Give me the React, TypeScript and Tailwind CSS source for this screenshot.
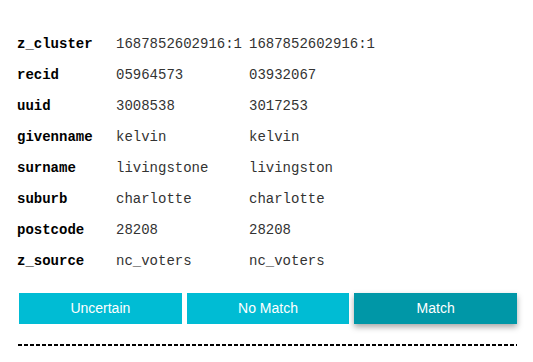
import React from "react";

const rows: [string, string, string][] = [
  ["z_cluster", "1687852602916:1", "1687852602916:1"],
  ["recid", "05964573", "03932067"],
  ["uuid", "3008538", "3017253"],
  ["givenname", "kelvin", "kelvin"],
  ["surname", "livingstone", "livingston"],
  ["suburb", "charlotte", "charlotte"],
  ["postcode", "28208", "28208"],
  ["z_source", "nc_voters", "nc_voters"],
];

export default function App() {
  return (
    <div className="w-[533px] h-[362px] bg-white overflow-hidden">
      <div
        className="pl-[17px] pt-[29px] text-[14px] text-black"
        style={{ fontFamily: '"Courier New", "Liberation Mono", monospace' }}
      >
        {rows.map(([k, a, b]) => (
          <div key={k} className="grid grid-cols-[99px_133px_1fr] h-[31px] items-center">
            <div className="font-bold text-black">{k}</div>
            <div className="text-[#333]">{a}</div>
            <div className="text-[#333]">{b}</div>
          </div>
        ))}
      </div>
      <div
        className="ml-[18px] w-[499px] mt-[16px]"
        style={{ fontFamily: '"Liberation Sans", Arial, sans-serif' }}
      >
        <div className="flex gap-[5px] pl-[1px]">
          <button className="flex-1 h-[31px] bg-[#00bcd4] text-white text-[14px]">Uncertain</button>
          <button className="flex-1 h-[31px] bg-[#00bcd4] text-white text-[14px]">No Match</button>
          <button className="flex-1 h-[31px] bg-[#0097a7] text-white text-[14px] shadow-[0_3px_6px_rgba(0,0,0,0.35)]">
            Match
          </button>
        </div>
        <div className="mt-[20px] h-[2px] bg-[repeating-linear-gradient(90deg,#000_0px,#000_4px,transparent_4px,transparent_6px)]" />
      </div>
    </div>
  );
}
